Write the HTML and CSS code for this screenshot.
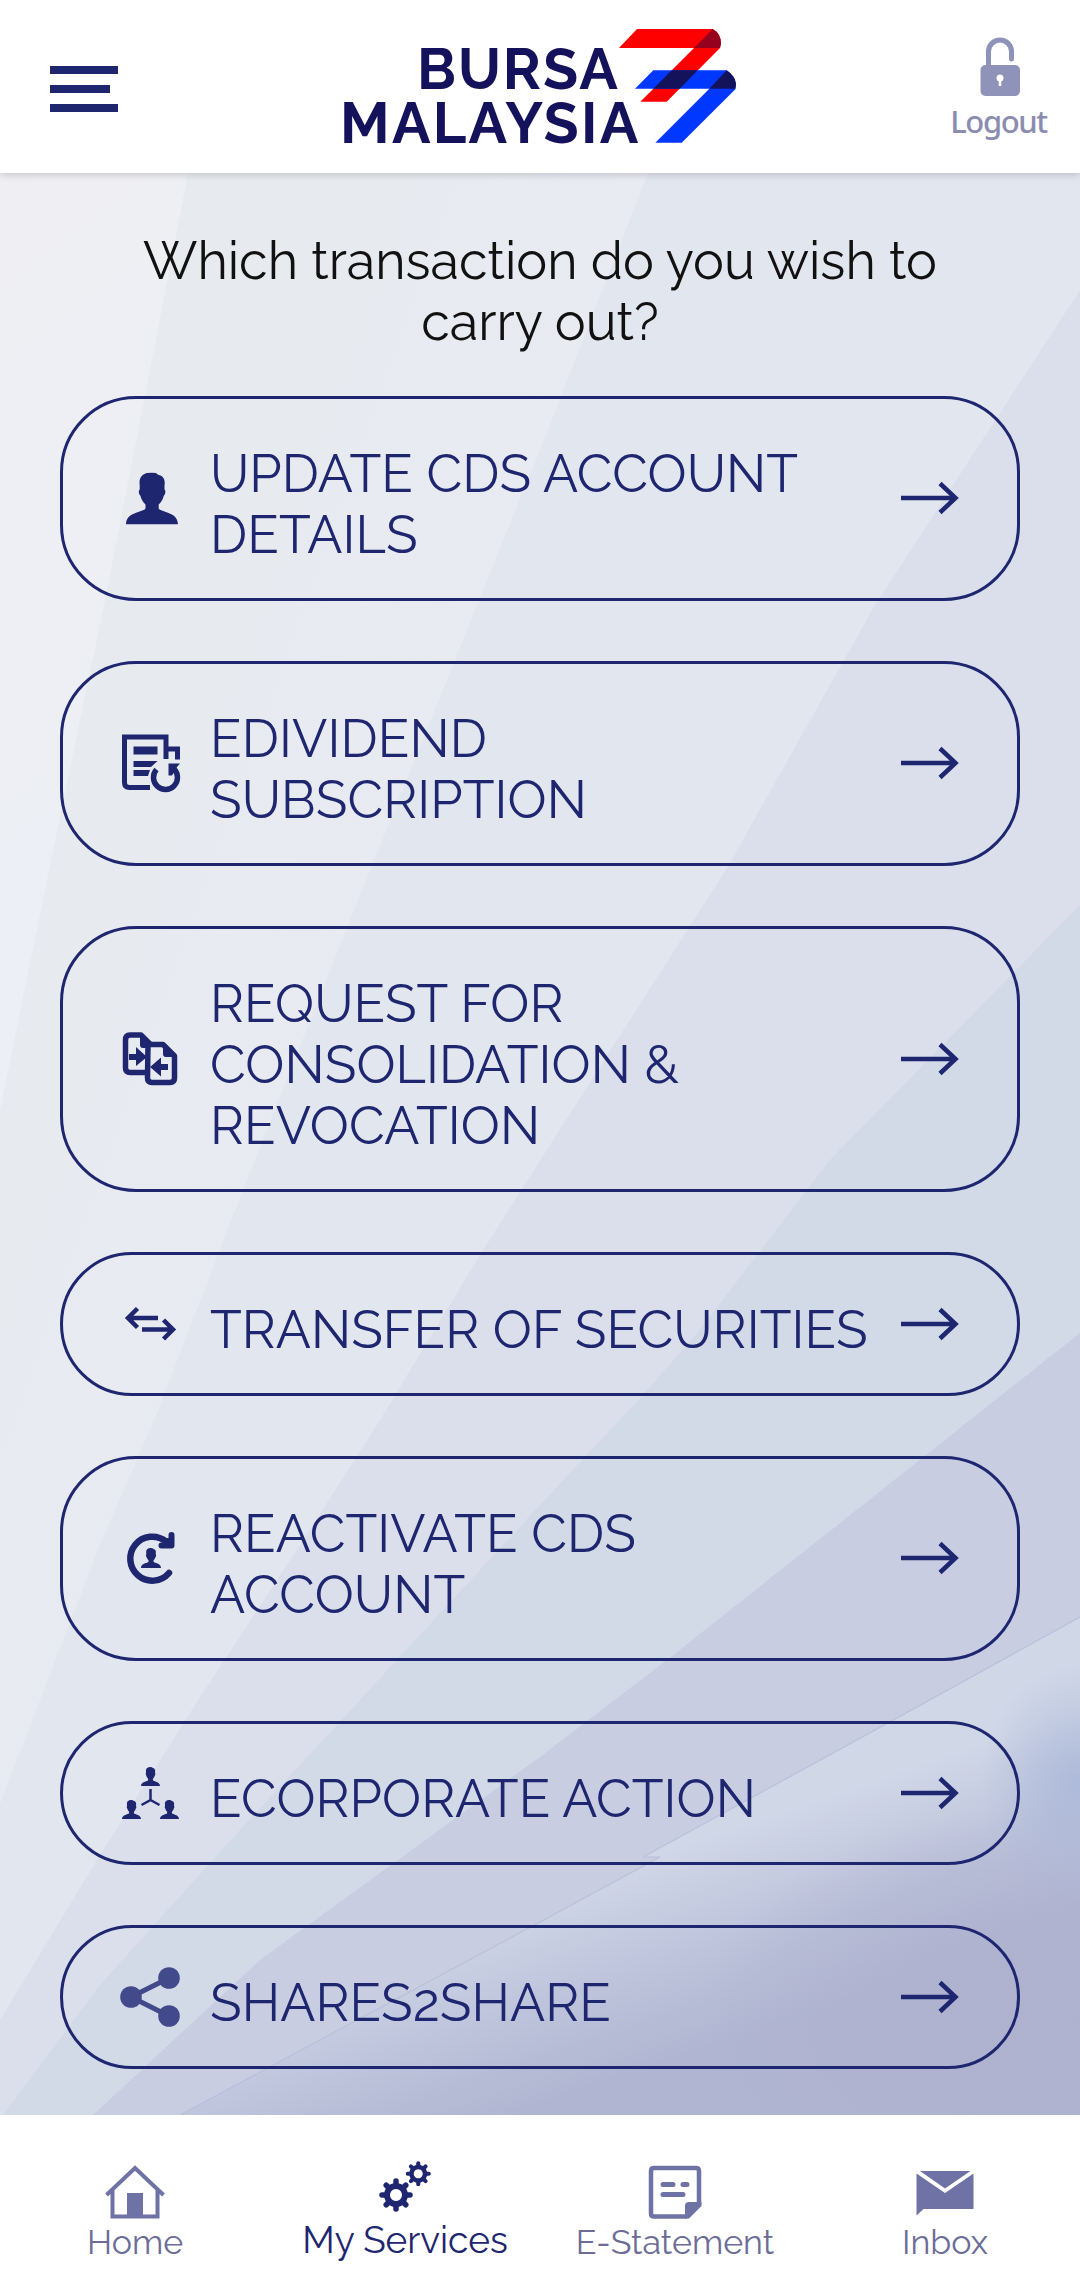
FILE: index.html
```html
<!DOCTYPE html>
<html lang="en">
<head>
    <meta charset="UTF-8">
    <meta name="viewport" content="width=device-width, initial-scale=1.0">
    <title>Bursa Malaysia - My Services</title>
    <link rel="stylesheet" href="styles.css">
</head>
<body>
    <!-- Shared symbols -->
    <svg class="symbols" width="0" height="0">
        <symbol id="arrow" viewBox="0 0 58 34">
            <path d="M0 17H54M39 2.500L54.500 17L39 31.500" fill="none" stroke="#1f2670" stroke-width="4.500"/>
        </symbol>
        <symbol id="person" viewBox="0 0 52 52">
            <path d="M26 0c3 0 5 .8 6.500 2.500C37 3 39.500 7 38.500 13v4c1.500 1 1 5-.8 6.500-1 4-2.500 6-5 8.500v4c2 4 19.300 3 19.300 16H0C0 39 17.500 40 19.500 36v-4c-2.500-2.500-4-4.500-5-8.500-1.800-1.500-2.300-5.500-.8-6.500v-4C12.500 4 17 0 26 0z"/>
        </symbol>
        <symbol id="gear" viewBox="-17 -17 34 34">
            <path fill-rule="evenodd" d="M0-12A12 12 0 1 0 .01-12zM0-6A6 6 0 1 1-.01-6z"/>
            <path d="M0-14V-10M0 14V10M-14 0H-10M14 0H10M-9.800-9.800L-7-7M9.800 9.800L7 7M-9.800 9.800L-7 7M9.800-9.800L7-7" stroke="currentColor" stroke-width="5.500" stroke-linecap="round"/>
        </symbol>
    </svg>

    <div class="app">
        <!-- Header -->
        <header class="header">
            <button class="menu" aria-label="Menu"><span></span><span></span><span></span></button>
            <svg class="logo" viewBox="0 0 1260 450" role="img" aria-label="Bursa Malaysia">
                <g fill="#15125c">
                    <text x="261" y="236" textLength="602">BURSA</text>
                    <text x="30" y="398" textLength="895">MALAYSIA</text>
                </g>
                <path fill="#ff0000" d="M867 114L921 57H1148Q1172 70 1173 100L1170 114L1010 275H931L1092 114z"/>
                <path fill="#95001f" d="M1092 114L1148 57Q1172 70 1173 100L1170 114z"/>
                <path fill="#0038ff" d="M915 236L970 181H1190Q1215 198 1218 222L1216 238L1055 398H976L1138 236z"/>
                <path fill="#15125c" d="M1138 236L1190 181Q1215 198 1218 222L1216 236zM1025 181H1103L1049 236H970z"/>
            </svg>
            <button class="logout">
                <svg width="42" height="60" viewBox="0 0 42 60">
                    <path d="M9.500 30V14.500a11.500 11.500 0 0 1 23 0V22" fill="none" stroke="#8f93ba" stroke-width="5" stroke-linecap="round"/>
                    <rect x="1.500" y="28" width="39.500" height="31" rx="5" fill="#8f93ba"/>
                    <circle cx="21" cy="41" r="3.500" fill="#fff"/>
                    <path d="M21 41V49" stroke="#fff" stroke-width="2.500"/>
                </svg>
                <span>Logout</span>
            </button>
        </header>

        <!-- Services -->
        <main class="content">
            <svg class="backdrop" viewBox="0 173 1080 1942" preserveAspectRatio="none">
                <defs>
                    <linearGradient id="left" x1="0" y1="173" x2="400" y2="700" gradientUnits="userSpaceOnUse">
                        <stop offset="0" stop-color="#efeff3"/><stop offset="1" stop-color="#eceff5"/>
                    </linearGradient>
                    <linearGradient id="band" x1="230" y1="700" x2="455" y2="780" gradientUnits="userSpaceOnUse">
                        <stop offset="0" stop-color="#e7ebf0"/><stop offset="1" stop-color="#e9eaf2"/>
                    </linearGradient>
                    <linearGradient id="fold" x1="610" y1="1870" x2="675" y2="2060" gradientUnits="userSpaceOnUse">
                        <stop offset="0" stop-color="#d0d7e7"/><stop offset=".45" stop-color="#c0c6dd"/><stop offset="1" stop-color="#b0b5d1"/>
                    </linearGradient>
                    <radialGradient id="glow">
                        <stop offset="0" stop-color="#abb8d8" stop-opacity=".9"/><stop offset="1" stop-color="#abb8d8" stop-opacity="0"/>
                    </radialGradient>
                    <radialGradient id="shade">
                        <stop offset="0" stop-color="#aeb2cf"/><stop offset=".5" stop-color="#aeb2cf" stop-opacity=".7"/><stop offset="1" stop-color="#aeb2cf" stop-opacity="0"/>
                    </radialGradient>
                    <clipPath id="corner"><path d="M1080 1617L888 1723L643 1857H660L540 1922L180 2115H1080z"/></clipPath>
                </defs>
                <rect y="173" width="1080" height="1942" fill="url(#left)"/>
                <path fill="url(#band)" d="M188 173L148 380L105 600L50 865L0 1110V2115H1080V173z"/>
                <path fill="#e2e6ef" d="M648 173L548 430L478 603L350 920L243 1190L155 1418L100 1545L0 1804V2115H1080V173z"/>
                <path fill="#dadfeb" d="M1080 290L875 605L727 868L550 1145L480 1255L380 1420L300 1545L195 1705L100 1855L0 2020V2115H1080z"/>
                <path fill="#d2d9e7" d="M1080 905L830 1160L698 1332L643 1395L540 1505L240 1830L100 1985L3 2115H1080z"/>
                <path fill="#c8cde1" d="M1080 1333L926 1455L667 1660L540 1757L260 1960L93 2115H1080z"/>
                <g clip-path="url(#corner)">
                    <rect y="1600" width="1080" height="515" fill="url(#fold)"/>
                    <ellipse cx="1080" cy="2020" rx="380" ry="220" fill="url(#shade)"/>
                    <ellipse cx="1080" cy="1785" rx="100" ry="120" fill="url(#glow)"/>
                </g>
                <path d="M1080 1617L888 1723L643 1857H660L540 1922L180 2115" fill="none" stroke="#b9c0db" stroke-width="1.200"/>
            </svg>

            <h1 class="question">Which transaction do you wish to<br>carry out?</h1>

            <div class="services">
                <button class="card">
                    <svg class="icon" viewBox="0 0 62 62"><use href="#person" x="6" y="4.500" width="52" height="52"/></svg>
                    <span class="label">UPDATE CDS ACCOUNT<br>DETAILS</span>
                    <svg class="arrow"><use href="#arrow"/></svg>
                </button>
                <button class="card">
                    <svg class="icon" viewBox="0 0 62 62">
                        <path d="M30 54.500H9.500Q4.500 54.500 4.500 49.500V4H46V26M46 16H57.500V26.500" fill="none" stroke="#1f2670" stroke-width="5"/>
                        <path d="M13.500 13.500H37.500V21.500H13.500zM13.500 28H37.500L31 34H13.500zM13.500 37H30L28 43H13.500z"/>
                        <path d="M36.500 36.500A12 12 0 1 0 54 36" fill="none" stroke="#1f2670" stroke-width="5.500"/>
                        <path d="M48.500 30.500H60L57 34L52 42.500H48.500z"/>
                    </svg>
                    <span class="label">EDIVIDEND<br>SUBSCRIPTION</span>
                    <svg class="arrow"><use href="#arrow"/></svg>
                </button>
                <button class="card">
                    <svg class="icon" viewBox="0 0 62 62">
                        <g fill="none" stroke="#1f2670" stroke-width="5.500" stroke-linejoin="round">
                            <path d="M27 44.500H10Q5.500 44.500 5.500 40V12Q5.500 7 10 7H21L30 16"/>
                            <path d="M28 16.500H43L54.500 28V50Q54.500 54.500 50 54.500H32Q27.500 54.500 27.500 50z"/>
                        </g>
                        <path d="M20 6L30 16V20H23Q20 20 20 17zM43 16L56 29H46Q43 29 43 26zM9 26H16V19L27 29L16 38V32H9zM48 36H41V29.500L30 39L41 48.500V42H48z"/>
                    </svg>
                    <span class="label">REQUEST FOR<br>CONSOLIDATION &amp;<br>REVOCATION</span>
                    <svg class="arrow"><use href="#arrow"/></svg>
                </button>
                <button class="card">
                    <svg class="icon" viewBox="0 0 62 62">
                        <path d="M38 25H9M17.500 15.500L8 25L17.500 34.500M22 36.500H52M43.500 27L53 36.500L43.500 46" fill="none" stroke="#1f2670" stroke-width="4.500"/>
                    </svg>
                    <span class="label">TRANSFER OF SECURITIES</span>
                    <svg class="arrow"><use href="#arrow"/></svg>
                </button>
                <button class="card">
                    <svg class="icon" viewBox="0 0 62 62">
                        <path d="M46 13.500A22 22 0 1 0 49 45" fill="none" stroke="#1f2670" stroke-width="6.500" stroke-linecap="round"/>
                        <path d="M51.500 7V17.500H41.500" fill="none" stroke="#1f2670" stroke-width="6" stroke-linecap="round" stroke-linejoin="round"/>
                        <path d="M43 10L52 10V18z"/>
                        <use href="#person" x="21" y="20" width="20" height="20"/>
                    </svg>
                    <span class="label">REACTIVATE CDS<br>ACCOUNT</span>
                    <svg class="arrow"><use href="#arrow"/></svg>
                </button>
                <button class="card">
                    <svg class="icon" viewBox="0 0 62 62">
                        <use href="#person" x="21" y="5" width="19" height="19"/>
                        <use href="#person" x="2" y="38" width="19" height="19"/>
                        <use href="#person" x="40" y="38" width="19" height="19"/>
                        <path d="M30.500 27V38L21.500 43M30.500 38L39.500 43" fill="none" stroke="#1f2670" stroke-width="2.500"/>
                    </svg>
                    <span class="label">ECORPORATE ACTION</span>
                    <svg class="arrow"><use href="#arrow"/></svg>
                </button>
                <button class="card">
                    <svg class="icon share" viewBox="0 0 62 62">
                        <path d="M49 12L11 31L49 50" fill="none" stroke="#434a8b" stroke-width="5"/>
                        <circle cx="11" cy="31" r="10.800"/><circle cx="49" cy="12" r="10.800"/><circle cx="49" cy="50" r="10.800"/>
                    </svg>
                    <span class="label">SHARES2SHARE</span>
                    <svg class="arrow"><use href="#arrow"/></svg>
                </button>
            </div>
        </main>

        <!-- Bottom navigation -->
        <nav class="tabs">
            <a class="tab">
                <svg width="60" height="56" viewBox="0 0 60 56">
                    <path d="M1.500 30L30 3L58.500 30M7.500 25V51.500H52.500V25" fill="none" stroke="#6e72a5" stroke-width="4"/>
                    <path fill="#6e72a5" d="M22 28H38V52H22z"/>
                </svg>
                <span>Home</span>
            </a>
            <a class="tab active">
                <svg width="60" height="56" viewBox="0 0 60 56">
                    <use href="#gear" x="4" y="17" width="34" height="34"/>
                    <use href="#gear" x="30.500" y="0" width="25.500" height="25.500"/>
                </svg>
                <span>My Services</span>
            </a>
            <a class="tab">
                <svg width="60" height="56" viewBox="0 0 60 56">
                    <path d="M42 51.500H9Q6 51.500 6 48.500V6Q6 3 9 3H51Q54 3 54 6V40" fill="none" stroke="#6e72a5" stroke-width="4.500"/>
                    <path d="M40 53.500V41Q40 37 44 37H56.500V41L44 53.500z" fill="#6e72a5"/>
                    <path d="M18 19.500H28M38 19.500H42M18 29.500H38" stroke="#6e72a5" stroke-width="5" stroke-linecap="round"/>
                </svg>
                <span>E-Statement</span>
            </a>
            <a class="tab">
                <svg width="60" height="56" viewBox="0 0 60 56">
                    <path fill="#6e72a5" d="M5 6H55.500L30 23.500zM1.500 8.500L30 28L58.500 8.500V44H8.500L1.500 50.500z"/>
                </svg>
                <span>Inbox</span>
            </a>
        </nav>
    </div>
</body>
</html>
```

FILE: styles.css
```css
* {
    margin: 0;
    padding: 0;
    box-sizing: border-box;
}

body {
    font-family: 'Raleway', 'Lato', sans-serif;
    background: #fff;
}

button {
    background: none;
    border: none;
    font: inherit;
    color: inherit;
    cursor: pointer;
}

.symbols {
    position: absolute;
}

.app {
    display: flex;
    flex-direction: column;
    height: 2282px;
}

/* Header */
.header {
    position: relative;
    z-index: 1;
    display: flex;
    justify-content: space-between;
    height: 173px;
    padding: 10px 30px 0 50px;
    background: #fff;
    box-shadow: 0 1px 8px rgba(0, 0, 0, 0.2);
}

.menu {
    display: flex;
    flex-direction: column;
    gap: 11px;
    width: 100px;
    padding-top: 56px;
}

.menu span {
    width: 68px;
    height: 8px;
    background: #1f2670;
}

.menu span:nth-child(2) {
    width: 60px;
}

.logo {
    width: 420px;
    height: 150px;
    margin-left: -20px;
}

.logo text {
    font-weight: 700;
    font-size: 172px;
}

.logout {
    display: flex;
    flex-direction: column;
    align-items: center;
    width: 100px;
    padding-top: 27px;
    font-family: 'Noto Sans', sans-serif;
    font-size: 31px;
    font-weight: 500;
    line-height: 48px;
    letter-spacing: -1.4px;
    color: #8b8daf;
}

.logout span {
    margin-right: 3px;
}

/* Services */
.content {
    position: relative;
    flex: 1;
    padding: 57px 60px 0;
}

.backdrop {
    position: absolute;
    inset: 0;
    width: 100%;
    height: 100%;
    z-index: -1;
}

.question {
    height: 166px;
    text-align: center;
    font-size: 52px;
    font-weight: 400;
    line-height: 61px;
    color: #111;
    white-space: nowrap;
}

.services {
    display: flex;
    flex-direction: column;
    gap: 60px;
}

.card {
    display: flex;
    align-items: center;
    padding: 38px 58px 39px 57px;
    border: 3px solid #1f2670;
    border-radius: 76px;
    color: #1f2670;
    text-align: left;
}

.icon {
    flex: none;
    width: 62px;
    height: 62px;
    margin-bottom: -1px;
    fill: #1f2670;
}

.icon.share {
    fill: #434a8b;
}

.label {
    flex: 1;
    margin: 6px 0 -6px 28px;
    font-size: 52px;
    font-weight: 400;
    line-height: 61px;
    letter-spacing: 0.1px;
    white-space: nowrap;
}

.arrow {
    flex: none;
    width: 58px;
    height: 34px;
}

/* Bottom navigation */
.tabs {
    display: grid;
    grid-template-columns: repeat(4, 1fr);
    height: 167px;
    background: #fff;
}

.tab {
    display: flex;
    flex-direction: column;
    align-items: center;
    padding-top: 50px;
    font-size: 34px;
    font-weight: 400;
    line-height: 43px;
    color: #6b6d97;
}

.tab span {
    white-space: nowrap;
}

.tab.active {
    padding-top: 46px;
    font-size: 37px;
    line-height: 46px;
    color: #1f2670;
    fill: #1f2670;
}
```
